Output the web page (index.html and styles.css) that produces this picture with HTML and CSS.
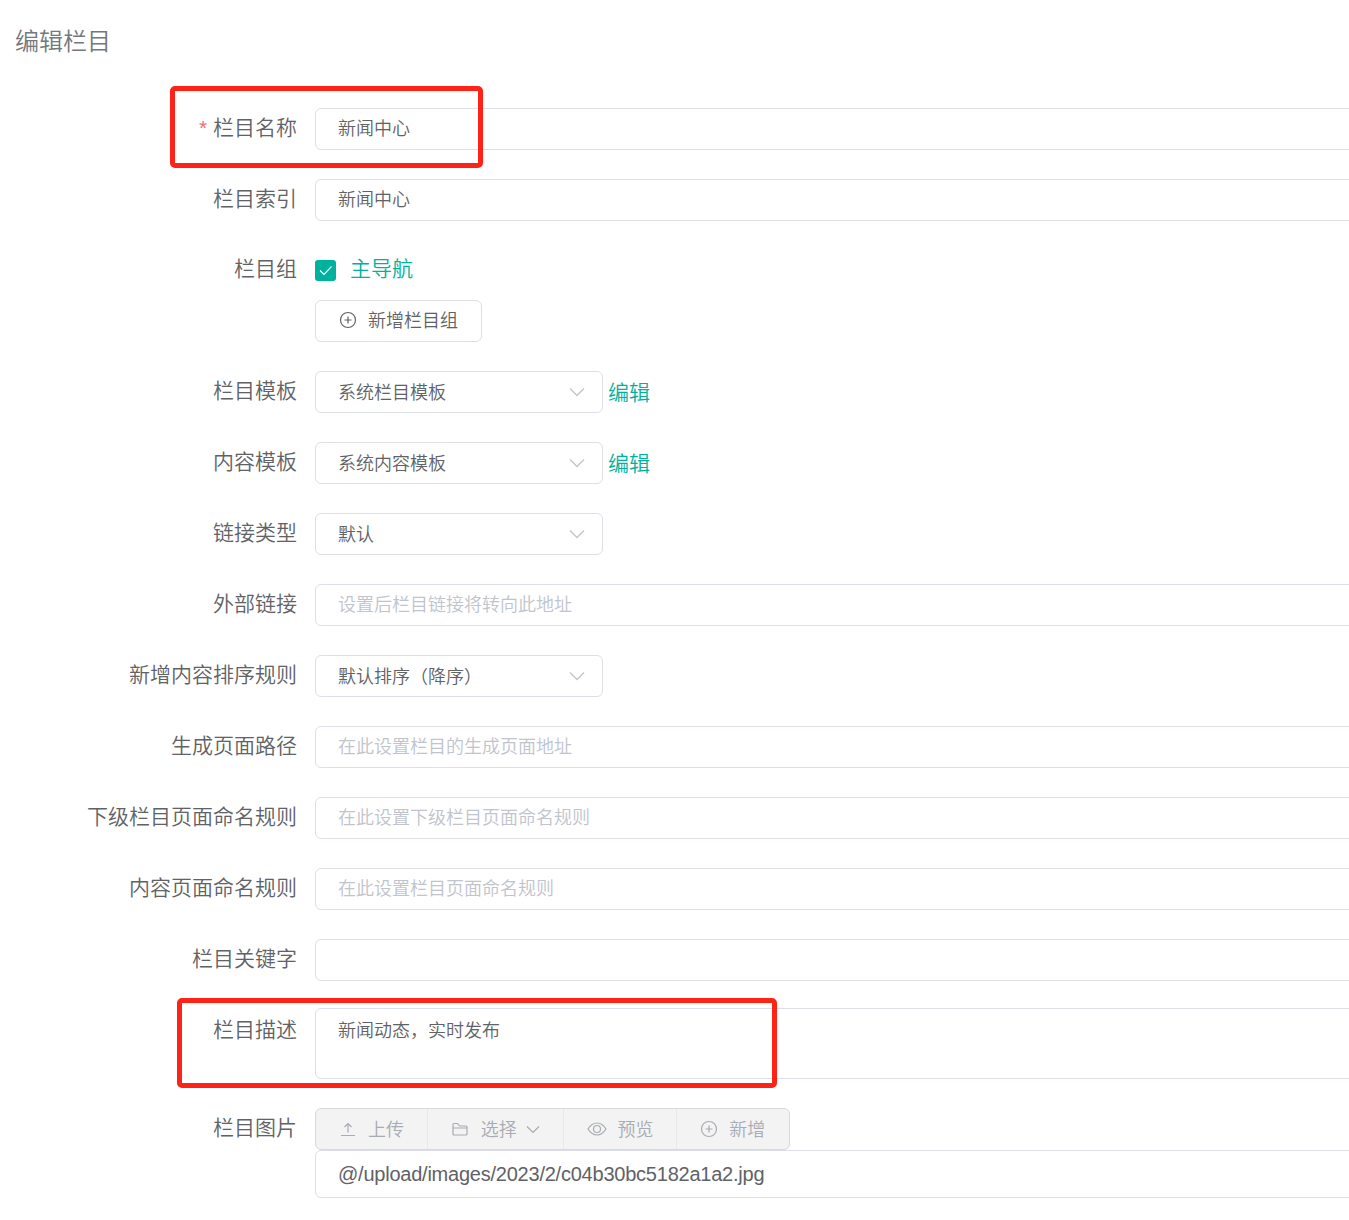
FILE: index.html
```html
<!DOCTYPE html>
<html lang="zh-CN">
<head>
<meta charset="utf-8">
<title>编辑栏目</title>
<link rel="stylesheet" href="styles.css">
</head>
<body>
<h1 class="page-title">编辑栏目</h1>
<form class="form">
  <div class="row"><div class="label"><span class="req">*</span> 栏目名称</div><div class="control"><div class="input">新闻中心</div></div></div>
  <div class="row"><div class="label">栏目索引</div><div class="control"><div class="input">新闻中心</div></div></div>
  <div class="row"><div class="label label-up">栏目组</div><div class="control">
    <div class="check-line"><span class="checkbox"><svg viewBox="0 0 21 21" width="21" height="21"><path d="M5 10.500l4 4 7.500-8" fill="none" stroke="#fff" stroke-width="1.100"/></svg></span><span class="check-text">主导航</span></div>
    <div class="btn"><svg class="ico" viewBox="0 0 18 18"><circle cx="9" cy="9" r="7.500"/><path d="M9 5.500v7M5.500 9h7"/></svg><span>新增栏目组</span></div>
  </div></div>
  <div class="row"><div class="label">栏目模板</div><div class="control inline"><div class="select">系统栏目模板<svg class="chev" viewBox="0 0 16 10"><path d="M1 1.500l7 7 7-7"/></svg></div><a class="link">编辑</a></div></div>
  <div class="row"><div class="label">内容模板</div><div class="control inline"><div class="select">系统内容模板<svg class="chev" viewBox="0 0 16 10"><path d="M1 1.500l7 7 7-7"/></svg></div><a class="link">编辑</a></div></div>
  <div class="row"><div class="label">链接类型</div><div class="control inline"><div class="select">默认<svg class="chev" viewBox="0 0 16 10"><path d="M1 1.500l7 7 7-7"/></svg></div></div></div>
  <div class="row"><div class="label">外部链接</div><div class="control"><div class="input ph">设置后栏目链接将转向此地址</div></div></div>
  <div class="row"><div class="label">新增内容排序规则</div><div class="control inline"><div class="select">默认排序（降序）<svg class="chev" viewBox="0 0 16 10"><path d="M1 1.500l7 7 7-7"/></svg></div></div></div>
  <div class="row"><div class="label">生成页面路径</div><div class="control"><div class="input ph">在此设置栏目的生成页面地址</div></div></div>
  <div class="row"><div class="label">下级栏目页面命名规则</div><div class="control"><div class="input ph">在此设置下级栏目页面命名规则</div></div></div>
  <div class="row"><div class="label">内容页面命名规则</div><div class="control"><div class="input ph">在此设置栏目页面命名规则</div></div></div>
  <div class="row row-tight"><div class="label">栏目关键字</div><div class="control"><div class="input"></div></div></div>
  <div class="row"><div class="label label-down">栏目描述</div><div class="control"><div class="textarea">新闻动态，实时发布</div></div></div>
  <div class="row"><div class="label">栏目图片</div><div class="control">
    <div class="btn-group">
      <div class="seg seg-upload"><svg class="ico" viewBox="0 0 18 18"><path d="M2 15.500h14M9 12.500V3.500M5.500 7L9 3.500 12.500 7"/></svg><span>上传</span></div>
      <div class="seg seg-choose"><svg class="ico" viewBox="0 0 18 18"><path d="M2 14V4.500q0-1 1-1h3.500L8.500 6H15q1 0 1 1v7q0 1-1 1H3q-1 0-1-1zM2 8h14"/></svg><span>选择</span><svg class="chev-sm" viewBox="0 0 14 9"><path d="M1 1.500l6 6 6-6"/></svg></div>
      <div class="seg seg-preview"><svg class="ico ico-wide" viewBox="0 0 20 18"><path d="M1 9c2.500-4 5.500-6 9-6s6.500 2 9 6c-2.500 4-5.500 6-9 6s-6.500-2-9-6z"/><circle cx="10" cy="9" r="3.500"/></svg><span>预览</span></div>
      <div class="seg seg-add"><svg class="ico" viewBox="0 0 18 18"><circle cx="9" cy="9" r="7.500"/><path d="M9 5.500v7M5.500 9h7"/></svg><span>新增</span></div>
    </div>
    <div class="input input-lg">@/upload/images/2023/2/c04b30bc5182a1a2.jpg</div>
  </div></div>
</form>
<div class="mark mark-name"></div>
<div class="mark mark-desc"></div>
</body>
</html>
```
FILE: styles.css
```css
* { box-sizing: border-box; }
html, body { margin: 0; padding: 0; background: #fff; }
body {
  position: relative;
  width: 1349px;
  height: 1220px;
  overflow: hidden;
  font-family: "Liberation Sans", "Noto Sans CJK SC", sans-serif;
  font-weight: 350;
  color: #606266;
}
.page-title {
  margin: 0;
  padding: 24px 0 0 15px;
  height: 108px;
  font-size: 24px;
  line-height: 36px;
  font-weight: 350;
  color: #74787d;
}
.row { display: flex; margin-bottom: 29px; }
.row-tight { margin-bottom: 27px; }
.label {
  flex: 0 0 315px;
  padding: 0 18px 3px 0;
  height: 42px;
  line-height: 39px;
  font-size: 21px;
  text-align: right;
  color: #606266;
  white-space: nowrap;
}
.label-up { line-height: 37px; }
.label-down { line-height: 43px; }
.req { color: #f56c6c; }
.control { flex: 0 0 1100px; }
.inline { display: flex; align-items: center; }
.input, .select, .textarea {
  border: 1px solid #dcdfe6;
  border-radius: 6px;
  background: #fff;
  font-size: 18px;
  color: #606266;
  padding: 0 22px;
}
.input { height: 42px; line-height: 41px; }
.ph { color: #c0c4cc; }
.textarea { height: 71px; line-height: 44px; }
.select {
  width: 288px;
  height: 42px;
  line-height: 39px;
  display: flex;
  align-items: center;
  justify-content: space-between;
  padding-top: 2px;
  padding-right: 17px;
}
.chev { width: 16px; height: 10px; flex: none; margin-top: -3px; }
.chev path { fill: none; stroke: #c0c4cc; stroke-width: 1.300; }
.link { margin-left: 5px; margin-top: 2px; font-size: 21px; color: #00b19d; line-height: 38px; }
.check-line { display: flex; align-items: center; height: 40px; margin-bottom: 10px; }
.checkbox {
  width: 21px;
  height: 21px;
  border-radius: 3px;
  background: #00b19d;
  display: block;
}
.checkbox svg { display: block; }
.check-text { margin-left: 14px; margin-bottom: 2px; font-size: 21px; color: #00b19d; line-height: 36px; }
.btn {
  display: flex;
  align-items: center;
  width: 167px;
  height: 42px;
  border: 1px solid #dcdfe6;
  border-radius: 6px;
  padding: 0 0 2px 23px;
  font-size: 18px;
  color: #606266;
}
.btn span { margin-bottom: 2px; }
.ico {
  width: 18px;
  height: 18px;
  margin-right: 11px;
  flex: none;
  fill: none;
  stroke: currentColor;
  stroke-width: 1.200;
}
.ico-wide { width: 20px; margin-right: 10px; }
.btn-group {
  display: flex;
  width: 475px;
  height: 42px;
  border: 1px solid #d9d9dc;
  border-radius: 6px;
  background: #f3f3f4;
  color: #a8abb2;
  font-size: 18px;
}
.seg {
  display: flex;
  align-items: center;
  border-right: 1px solid #e8e8ea;
  padding-left: 23px;
}
.seg span { margin-bottom: 2px; }
.seg:last-child { border-right: 0; }
.seg-upload { width: 112px; }
.seg-choose { width: 137px; }
.seg-choose .ico { margin-right: 12px; }
.seg-preview { width: 113px; }
.seg-add { width: 112px; }
.chev-sm { width: 14px; height: 9px; margin-left: 9px; flex: none; }
.chev-sm path { fill: none; stroke: currentColor; stroke-width: 1.200; }
.input-lg { height: 48px; line-height: 46px; font-size: 20px; letter-spacing: -0.23px; }
.mark {
  position: absolute;
  border: 5px solid #ff2217;
  border-radius: 5px;
  pointer-events: none;
}
.mark-name { left: 170px; top: 86px; width: 313px; height: 82px; }
.mark-desc { left: 177px; top: 998px; width: 600px; height: 90px; }
```
